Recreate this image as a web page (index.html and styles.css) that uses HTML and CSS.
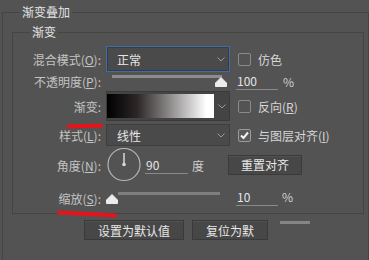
FILE: index.html
```html
<!DOCTYPE html>
<html lang="zh">
<head>
    <meta charset="UTF-8">
    <title>渐变叠加</title>
    <link rel="stylesheet" href="styles.css">
</head>
<body>

<fieldset class="outer">
    <legend class="outer-title">渐变叠加</legend>

    <fieldset class="group">
        <legend class="group-title">渐变</legend>

        <div class="row row-blend">
            <span class="label">混合模式(<u>O</u>):</span>
            <div class="select focused">
                <span>正常</span>
                <svg class="chev" width="8" height="5" viewBox="0 0 8 5"><polyline points="0.5,0.5 4,4 7.5,0.5" fill="none" stroke="#9a9a9a" stroke-width="1"/></svg>
            </div>
            <label class="check"><span class="box"></span><span>仿色</span></label>
        </div>

        <div class="row row-opacity">
            <span class="label">不透明度(<u>P</u>):</span>
            <div class="slider">
                <span class="track track-full"></span>
                <svg class="thumb thumb-opacity" width="12" height="10" viewBox="0 0 12 10"><path d="M6 0.5 L11.5 6 V9.5 H0.5 V6 Z" fill="#ececec" stroke="#ececec" stroke-linejoin="round"/></svg>
            </div>
            <span class="num">100</span>
            <span class="unit">%</span>
        </div>

        <div class="row row-gradient">
            <span class="label">渐变:<span class="mark mark-gradient"></span></span>
            <div class="gradient">
                <span class="ramp"></span>
                <span class="gradient-drop">
                    <svg width="8" height="5" viewBox="0 0 8 5"><polyline points="0.5,0.5 4,4 7.5,0.5" fill="none" stroke="#9a9a9a" stroke-width="1"/></svg>
                </span>
            </div>
            <label class="check"><span class="box"></span><span>反向(<u>R</u>)</span></label>
        </div>

        <div class="row row-style">
            <span class="label">样式(<u>L</u>):</span>
            <div class="select">
                <span>线性</span>
                <svg class="chev" width="8" height="5" viewBox="0 0 8 5"><polyline points="0.5,0.5 4,4 7.5,0.5" fill="none" stroke="#9a9a9a" stroke-width="1"/></svg>
            </div>
            <label class="check">
                <span class="box checked">
                    <svg width="11" height="11" viewBox="0 0 11 11"><polyline points="2,5.5 4.5,8 9,2.5" fill="none" stroke="#f2f2f2" stroke-width="2"/></svg>
                </span><span>与图层对齐(<u>I</u>)</span>
            </label>
        </div>

        <div class="row row-angle">
            <span class="label">角度(<u>N</u>):</span>
            <svg class="dial" width="36" height="34" viewBox="0 0 36 34">
                <circle cx="18" cy="16.5" r="16" fill="none" stroke="#b4b4b4" stroke-width="1.2"/>
                <line x1="18" y1="5" x2="18" y2="16.5" stroke="#d8d8d8" stroke-width="1.5"/>
                <circle cx="18" cy="16.5" r="1.8" fill="#d8d8d8"/>
            </svg>
            <span class="num num-angle">90</span>
            <span class="unit unit-deg">度</span>
            <button type="button" class="btn btn-align">重置对齐</button>
        </div>

        <div class="row row-scale">
            <span class="label">缩放(<u>S</u>):<span class="mark mark-scale"></span></span>
            <div class="slider">
                <span class="track track-scale"></span>
                <svg class="thumb thumb-scale" width="12" height="10" viewBox="0 0 12 10"><path d="M6 0.5 L11.5 6 V9.5 H0.5 V6 Z" fill="#ececec" stroke="#ececec" stroke-linejoin="round"/></svg>
            </div>
            <span class="num num-scale">10</span>
            <span class="unit unit-scale">%</span>
        </div>
    </fieldset>

    <div class="actions">
        <button type="button" class="btn btn-default">设置为默认值</button>
        <button type="button" class="btn btn-reset">复位为默</button>
        <span class="ghost-bar"></span>
    </div>
</fieldset>

</body>
</html>
```

FILE: styles.css
```css
body {
    margin: 0;
    padding: 4px 0 0 2px;
    background-color: #535353;
    color: #c4c4c4;
    font-family: "Noto Sans CJK SC", "Liberation Sans", sans-serif;
    font-size: 12px;
    overflow: hidden;
}

u {
    text-underline-offset: 1px;
}

.outer {
    margin: 0;
    width: 366px;
    min-height: 256px;
    box-sizing: border-box;
    border: 1px solid #444;
    border-bottom: none;
    padding: 4px 4px 0 9px;
}

.outer-title {
    margin-left: 8px;
    padding: 0 2px;
    line-height: 16px;
    color: #e4e4e4;
}

.group {
    margin: 0;
    width: 352px;
    box-sizing: border-box;
    border: 1px solid #444;
    padding: 6px 0 5px 0;
}

.group-title {
    margin-left: 17px;
    padding: 0 2px;
    line-height: 16px;
    color: #e4e4e4;
}

.row {
    display: flex;
    align-items: center;
}

.label {
    position: relative;
    width: 88px;
    margin-right: 5px;
    flex: none;
    text-align: right;
    white-space: nowrap;
}

/* rows */
.row-blend { height: 26px; }
.row-opacity { height: 19px; }
.row-gradient { height: 30px; }
.row-style { height: 22px; margin-top: 3px; }
.row-angle { height: 34px; margin-top: 2px; }
.row-scale { height: 20px; margin-top: 6px; }

/* dropdowns */
.select {
    width: 124px;
    height: 100%;
    box-sizing: border-box;
    display: flex;
    align-items: center;
    justify-content: space-between;
    padding: 0 4px 0 10px;
    background-color: #4a4a4a;
    border: 1px solid #3e3e3e;
    color: #e6e6e6;
    flex: none;
}

.select.focused {
    border-color: #3b6cae;
    box-shadow: inset 0 0 0 1px #3c3c3c;
}

/* checkboxes */
.check {
    display: flex;
    align-items: center;
    gap: 7px;
    margin-left: 8px;
    color: #d6d6d6;
    white-space: nowrap;
}

.box {
    width: 13px;
    height: 13px;
    box-sizing: border-box;
    border: 1px solid #8a8a8a;
    border-radius: 2px;
    display: flex;
    align-items: center;
    justify-content: center;
}

.box.checked {
    background-color: #5a5a5a;
    border-color: #9a9a9a;
}

/* sliders */
.slider {
    position: relative;
    width: 124px;
    height: 100%;
    flex: none;
}

.track {
    display: block;
    height: 3px;
    background-color: #8c8c8c;
}

.track-full {
    width: 110px;
    margin: 3px 0 0 6px;
}

.track-scale {
    width: 102px;
    margin: 4px 0 0 12px;
    background-color: #7e7e7e;
}

.thumb {
    position: absolute;
}

.thumb-opacity {
    left: 109px;
    top: 5px;
}

.thumb-scale {
    left: 0;
    top: 6px;
}

/* number fields */
.num {
    width: 42px;
    height: 17px;
    line-height: 16px;
    box-sizing: border-box;
    margin-left: 6px;
    padding-left: 1px;
    border-bottom: 1px solid #8a8a8a;
    color: #e4e4e4;
    flex: none;
}

.unit {
    margin-left: 5px;
    color: #d0d0d0;
}

.num-angle {
    width: 43px;
    margin-left: 3px;
    align-self: flex-end;
    margin-bottom: 8px;
}

.unit-deg {
    margin-left: 4px;
}

.num-scale {
    align-self: flex-end;
    margin-bottom: 2px;
    color: #dfe6f2;
}

.unit-scale {
    margin-left: 4px;
    align-self: flex-start;
}

/* gradient picker */
.gradient {
    width: 124px;
    height: 30px;
    box-sizing: border-box;
    display: flex;
    padding: 2px 0;
    background-color: #444;
    border: 1px solid #3a3a3a;
    flex: none;
}

.ramp {
    width: 107px;
    height: 100%;
    background: linear-gradient(to right, #000 0%, #2c2627 28%, #8b8888 58%, #fff 93%, #fff 100%);
}

.gradient-drop {
    flex: 1;
    display: flex;
    align-items: center;
    justify-content: center;
}

/* angle */
.dial {
    flex: none;
}

/* buttons */
.btn {
    height: 20px;
    box-sizing: border-box;
    padding: 0;
    background-color: #474747;
    border: 1px solid #3a3a3a;
    box-shadow: inset 0 1px 0 #525252;
    color: #e8e8e8;
    font-family: inherit;
    font-size: 12px;
    line-height: 17px;
    cursor: pointer;
}

.btn-align {
    width: 74px;
    margin-left: 24px;
    margin-bottom: 1px;
}

.actions {
    display: flex;
    gap: 8px;
    padding-left: 72px;
    margin-top: 6px;
}

.btn-default {
    width: 100px;
}

.btn-reset {
    width: 76px;
}

.ghost-bar {
    width: 30px;
    height: 3px;
    margin: 1px 0 0 4px;
    background-color: #858585;
}

/* red hand-drawn marks */
.mark {
    position: absolute;
    height: 4px;
    background-color: #e8121b;
    border-radius: 3px;
}

.mark-gradient {
    left: 54px;
    top: 26px;
    width: 36px;
    transform: rotate(-2deg);
}

.mark-scale {
    left: 44px;
    top: 22px;
    width: 60px;
    transform: rotate(3deg);
}
```
